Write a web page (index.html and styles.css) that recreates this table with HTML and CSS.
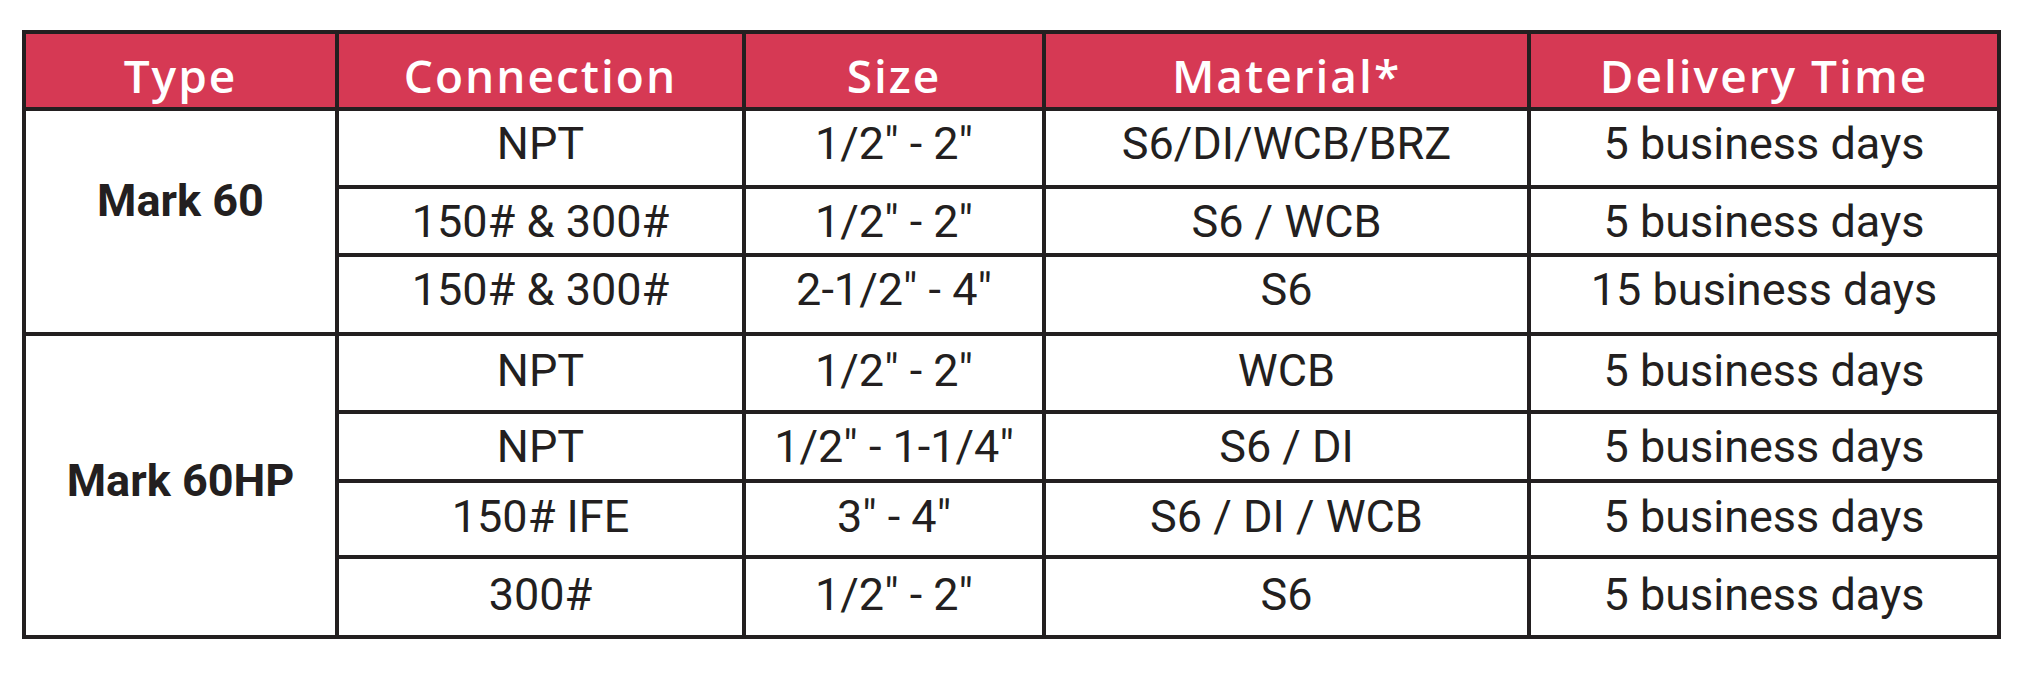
FILE: index.html
```html
<!DOCTYPE html>
<html lang="en">
<head>
<meta charset="utf-8">
<title>Mark 60 Delivery Times</title>
<link rel="stylesheet" href="styles.css">
</head>
<body>
<div class="spec-table" role="table">
  <div class="cell head" role="columnheader">Type</div>
  <div class="cell head" role="columnheader">Connection</div>
  <div class="cell head" role="columnheader">Size</div>
  <div class="cell head" role="columnheader">Material*</div>
  <div class="cell head" role="columnheader">Delivery Time</div>

  <div class="cell type type-a" role="rowheader">Mark 60</div>
  <div class="cell up">NPT</div>
  <div class="cell up">1/2" - 2"</div>
  <div class="cell up">S6/DI/WCB/BRZ</div>
  <div class="cell up">5 business days</div>

  <div class="cell down">150# &amp; 300#</div>
  <div class="cell down">1/2" - 2"</div>
  <div class="cell down">S6 / WCB</div>
  <div class="cell down">5 business days</div>

  <div class="cell up">150# &amp; 300#</div>
  <div class="cell up">2-1/2" - 4"</div>
  <div class="cell up">S6</div>
  <div class="cell up">15 business days</div>

  <div class="cell type type-b" role="rowheader">Mark 60HP</div>
  <div class="cell">NPT</div>
  <div class="cell">1/2" - 2"</div>
  <div class="cell">WCB</div>
  <div class="cell">5 business days</div>

  <div class="cell down">NPT</div>
  <div class="cell down">1/2" - 1-1/4"</div>
  <div class="cell down">S6 / DI</div>
  <div class="cell down">5 business days</div>

  <div class="cell">150# IFE</div>
  <div class="cell">3" - 4"</div>
  <div class="cell">S6 / DI / WCB</div>
  <div class="cell">5 business days</div>

  <div class="cell">300#</div>
  <div class="cell">1/2" - 2"</div>
  <div class="cell">S6</div>
  <div class="cell">5 business days</div>
</div>
</body>
</html>
```
FILE: styles.css
```css
html, body {
  margin: 0;
  background: #ffffff;
}

body {
  padding: 30px 0 0 22px;
  font-family: Roboto, "Liberation Sans", sans-serif;
  color: #231f20;
}

.spec-table {
  display: inline-grid;
  grid-template-columns: 309px 403px 296px 481px 466px;
  grid-template-rows: 73px 74px 64px 75px 74px 65px 72px 76px;
  gap: 4px;
  padding: 4px;
  background: #231f20;
}

.cell {
  background: #ffffff;
  display: flex;
  align-items: center;
  justify-content: center;
  font-size: 45px;
  line-height: 1;
  padding-bottom: 6px;
  box-sizing: border-box;
  white-space: nowrap;
}

.cell.up {
  padding-bottom: 10px;
}

.cell.down {
  padding-bottom: 2px;
  padding-top: 2px;
}

.head {
  background: #d63954;
  color: #ffffff;
  font-family: "Open Sans", "Liberation Sans", sans-serif;
  font-weight: 600;
  font-size: 46px;
  letter-spacing: 2px;
  padding: 9px 0 0 0;
}

.type {
  font-weight: 700;
  font-size: 45px;
  grid-column: 1;
}

.type-a {
  grid-row: 2 / span 3;
  padding-bottom: 42px;
}

.type-b {
  grid-row: 5 / span 4;
  padding-bottom: 10px;
}
```
